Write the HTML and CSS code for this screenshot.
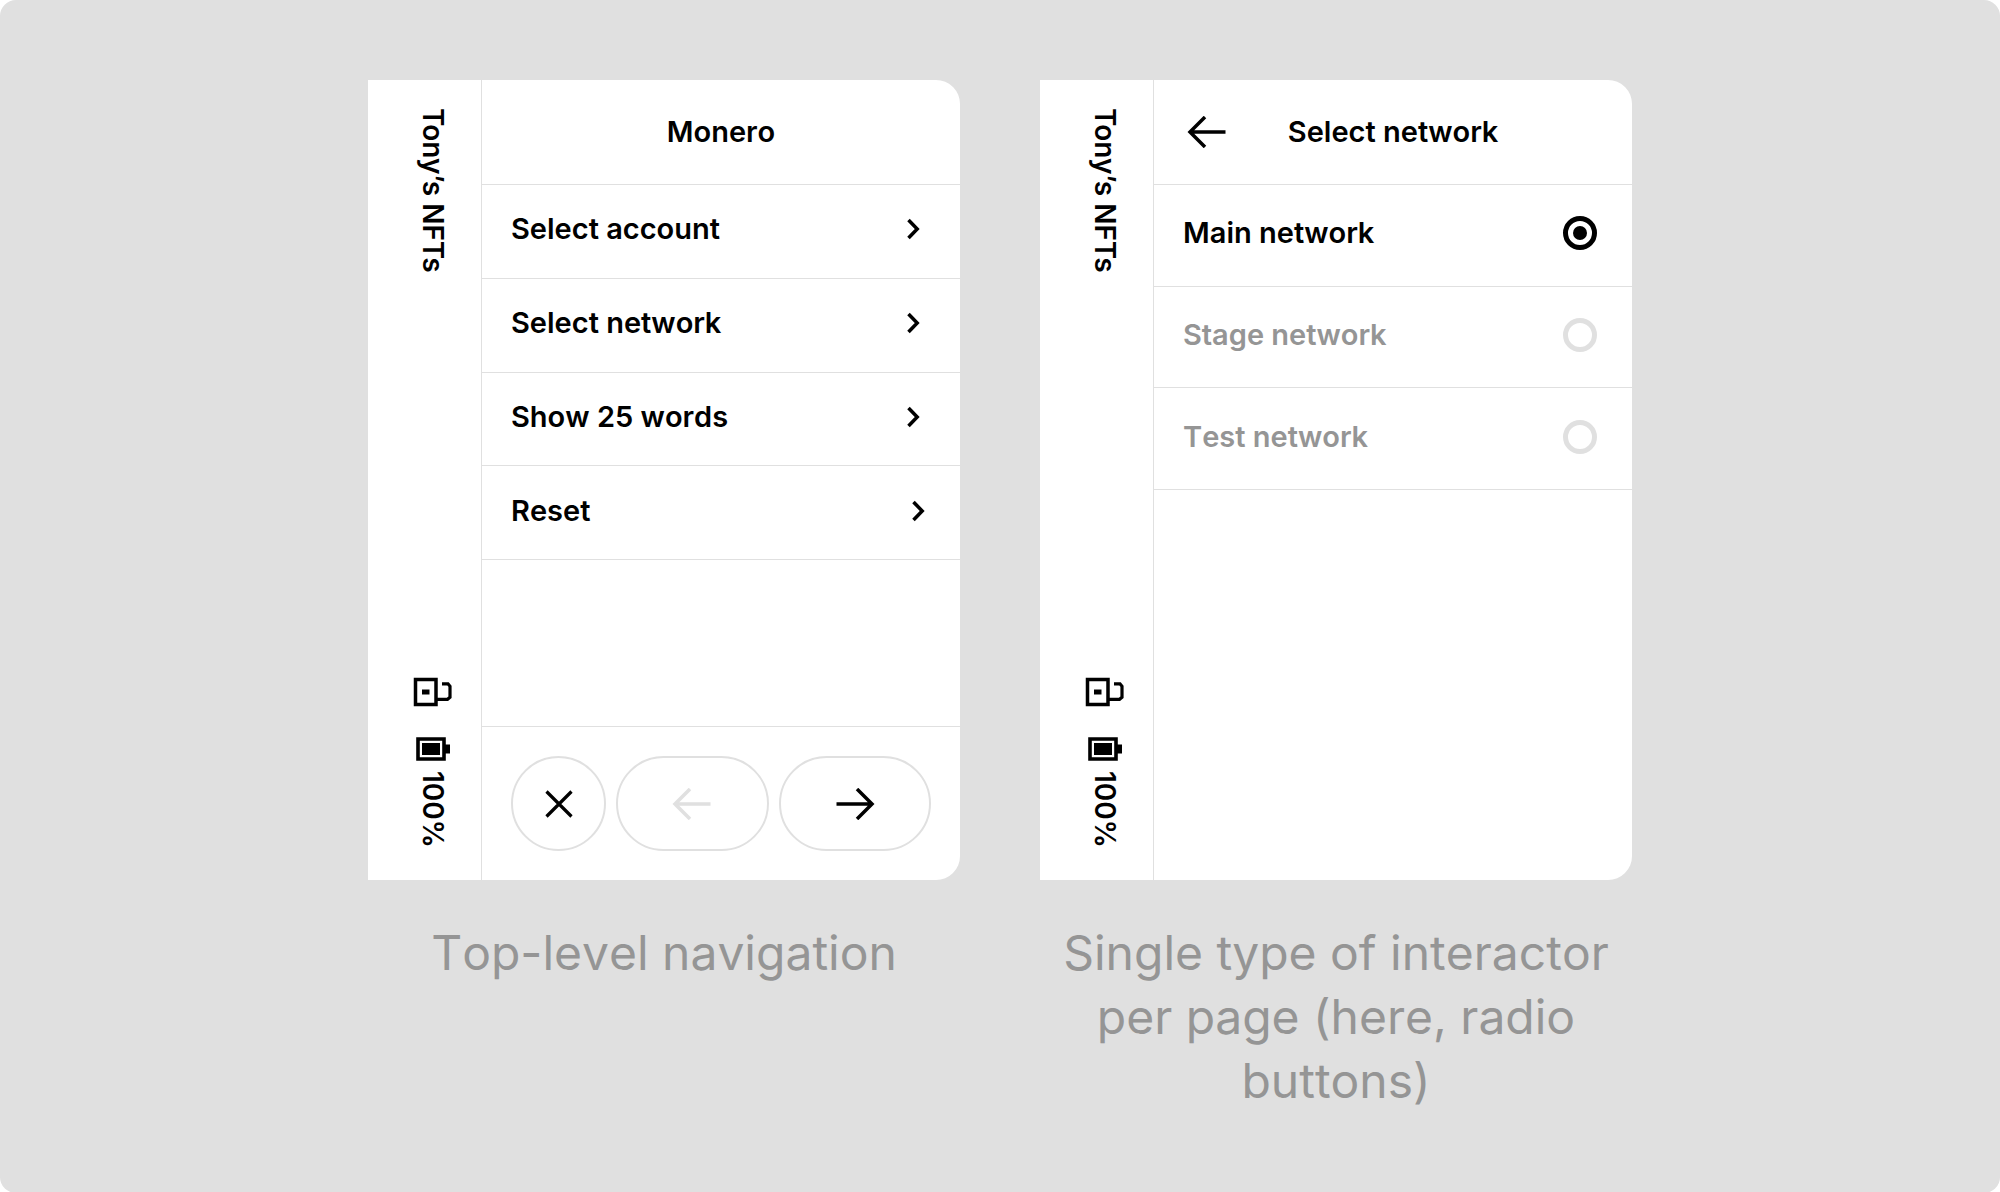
FILE: index.html
```html
<!DOCTYPE html>
<html lang="en">
<head>
<meta charset="utf-8">
<meta name="viewport" content="width=device-width, initial-scale=1">
<title>Wallet settings screens</title>
<link rel="stylesheet" href="styles.css">
</head>
<body>
<svg class="symbols" aria-hidden="true">
  <symbol id="lock" viewBox="0 0 40 30">
    <path d="M2.5 2.5h20.5v25h-20.5z" fill="none" stroke="currentColor" stroke-width="3.5"/>
    <path d="M24 22.3h10.5l2.5-2v-11l-2-2.5h-6" fill="none" stroke="currentColor" stroke-width="3.2"/>
    <path d="M9 12.5h7.5v5h-7.5z" fill="currentColor"/>
  </symbol>
  <symbol id="battery" viewBox="0 0 34 24">
    <path d="M2 2h26v20h-26z" fill="none" stroke="currentColor" stroke-width="3.6"/>
    <path d="M6 6h18v12h-18zM29 7.500h5v9h-5z" fill="currentColor"/>
  </symbol>
  <symbol id="chevron" viewBox="0 0 14 24">
    <path d="M1.500 3l8.700 9l-8.700 9" fill="none" stroke="currentColor" stroke-width="3.500"/>
  </symbol>
  <symbol id="arrow" viewBox="0 0 40 32">
    <path d="M38.500 16h-36M18 1l-15 15l15 15" fill="none" stroke="currentColor" stroke-width="3.500"/>
  </symbol>
  <symbol id="cross" viewBox="0 0 28 28">
    <path d="M1.500 1.500l25 25M26.500 1.500l-25 25" fill="none" stroke="currentColor" stroke-width="3.200"/>
  </symbol>
</svg>
<main class="board">
  <figure class="example">
    <div class="device">
      <aside class="sidebar">
        <span class="vertical">Tony’s NFTs</span>
        <div class="status">
          <svg class="lock" role="img" aria-label="Unlocked"><use href="#lock"/></svg>
          <svg class="battery" role="img" aria-label="Battery"><use href="#battery"/></svg>
          <span class="vertical">100%</span>
        </div>
      </aside>
      <section class="screen">
        <header class="bar"><h2 class="title">Monero</h2></header>
        <nav class="menu">
          <button class="row" type="button">Select account<svg class="chevron" aria-hidden="true"><use href="#chevron"/></svg></button>
          <button class="row" type="button">Select network<svg class="chevron" aria-hidden="true"><use href="#chevron"/></svg></button>
          <button class="row" type="button">Show 25 words<svg class="chevron" aria-hidden="true"><use href="#chevron"/></svg></button>
          <button class="row row-last" type="button">Reset<svg class="chevron" aria-hidden="true"><use href="#chevron"/></svg></button>
        </nav>
        <footer class="actions">
          <button class="pill round" type="button" aria-label="Close"><svg class="cross" aria-hidden="true"><use href="#cross"/></svg></button>
          <button class="pill" type="button" aria-label="Previous" disabled><svg class="arrow" aria-hidden="true"><use href="#arrow"/></svg></button>
          <button class="pill" type="button" aria-label="Next"><svg class="arrow forward" aria-hidden="true"><use href="#arrow"/></svg></button>
        </footer>
      </section>
    </div>
    <figcaption class="caption">Top-level navigation</figcaption>
  </figure>
  <figure class="example">
    <div class="device">
      <aside class="sidebar">
        <span class="vertical">Tony’s NFTs</span>
        <div class="status">
          <svg class="lock" role="img" aria-label="Unlocked"><use href="#lock"/></svg>
          <svg class="battery" role="img" aria-label="Battery"><use href="#battery"/></svg>
          <span class="vertical">100%</span>
        </div>
      </aside>
      <section class="screen">
        <header class="bar">
          <button class="back" type="button" aria-label="Back"><svg class="arrow" aria-hidden="true"><use href="#arrow"/></svg></button>
          <h2 class="title">Select network</h2>
        </header>
        <form class="options">
          <label class="row option" for="main-net">Main network<input class="radio" type="radio" name="network" id="main-net" checked></label>
          <label class="row option" for="stage-net">Stage network<input class="radio" type="radio" name="network" id="stage-net"></label>
          <label class="row option" for="test-net">Test network<input class="radio" type="radio" name="network" id="test-net"></label>
        </form>
      </section>
    </div>
    <figcaption class="caption">Single type of interactor per page (here, radio buttons)</figcaption>
  </figure>
</main>
</body>
</html>
```
FILE: styles.css
```css
* { box-sizing: border-box; }

body {
  margin: 0;
  background: #fff;
  color: #000;
  font-family: Inter, "Liberation Sans", sans-serif;
  font-kerning: none;
}

button {
  margin: 0;
  border: 0;
  padding: 0;
  background: none;
  color: inherit;
  font: inherit;
  font-kerning: none;
}

svg { display: block; flex: none; }
.symbols { position: absolute; width: 0; height: 0; }

.board {
  display: flex;
  flex-wrap: wrap;
  justify-content: center;
  align-items: flex-start;
  gap: 80px;
  min-height: 100vh;
  padding: 80px 40px;
  border-radius: 16px;
  background: #e0e0e0;
}

.example { flex: 0 1 592px; margin: 0; }

.device {
  display: flex;
  min-height: 800px;
  border-radius: 0 24px 24px 0;
  overflow: hidden;
  background: #fff;
  font-size: 29px;
  font-weight: 600;
  line-height: 36px;
}

.sidebar {
  display: flex;
  flex: none;
  flex-direction: column;
  align-items: center;
  justify-content: space-between;
  width: 114px;
  padding: 28px 0 32px 17px;
  border-right: 1px solid #e0e0e0;
  font-size: 28px;
}

.vertical { writing-mode: vertical-rl; }

.status {
  display: flex;
  flex-direction: column;
  align-items: center;
}

.lock { width: 40px; height: 30px; margin-bottom: 30px; }
.battery { width: 34px; height: 24px; margin-bottom: 10px; }

.screen {
  display: flex;
  flex: 1;
  flex-direction: column;
  min-width: 0;
}

.bar {
  display: grid;
  grid-template-columns: 80px 1fr 80px;
  align-items: center;
  height: 105px;
  border-bottom: 1px solid #e0e0e0;
}

.title {
  grid-column: 2;
  margin: 0;
  font-size: 29px;
  font-weight: 600;
  text-align: center;
  white-space: nowrap;
}

.back { grid-row: 1; padding-left: 33px; }

.menu, .options {
  display: flex;
  flex-direction: column;
}
.menu { height: 375px; }
.options { height: 305px; }

.row {
  display: flex;
  flex: 1;
  align-items: center;
  justify-content: space-between;
  padding: 0 39px 4px 29px;
  border-bottom: 1px solid #e0e0e0;
  text-align: left;
}
.row-last { padding-right: 34px; }

.option { padding-right: 35px; color: #959595; }
.option:has(:checked) { color: #000; }

.chevron { width: 14px; height: 24px; }
.arrow { width: 40px; height: 32px; }
.forward { transform: rotate(180deg); }
.cross { width: 28px; height: 28px; }

.radio {
  appearance: none;
  display: grid;
  place-items: center;
  width: 34px;
  height: 34px;
  margin: 0;
  border: 5px solid #e0e0e0;
  border-radius: 50%;
}
.radio:checked { border-color: #000; }
.radio:checked::before {
  content: "";
  width: 14px;
  height: 14px;
  border-radius: 50%;
  background: #000;
}

.actions {
  display: flex;
  gap: 10px;
  margin-top: auto;
  padding: 29px;
  border-top: 1px solid #e0e0e0;
}

.pill {
  display: flex;
  flex: 1;
  align-items: center;
  justify-content: center;
  height: 95px;
  border: 2px solid #e0e0e0;
  border-radius: 48px;
}
.pill:disabled { color: #e0e0e0; }
.round { flex: 0 0 95px; }

.caption {
  margin-top: 41px;
  color: #959595;
  font-size: 48px;
  line-height: 64px;
  text-align: center;
}
```
